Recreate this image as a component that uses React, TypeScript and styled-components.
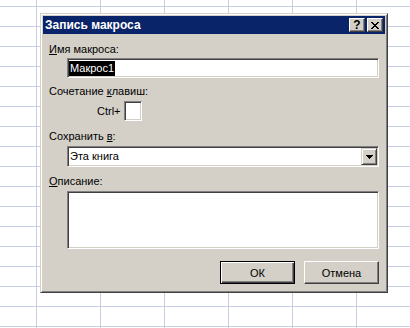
import React from "react";
import styled, { createGlobalStyle } from "styled-components";

const GlobalStyle = createGlobalStyle`
  html, body {
    margin: 0;
    padding: 0;
    width: 410px;
    height: 328px;
    overflow: hidden;
  }
  body {
    background-color: #ffffff;
    background-image:
      linear-gradient(to right, #c6cfe3 1px, transparent 1px),
      linear-gradient(to bottom, #c6cfe3 1px, transparent 1px);
    background-size: 64px 20px;
    background-position: 36px 6px;
    font-family: "Liberation Sans", Tahoma, Arial, sans-serif;
    font-size: 11px;
    color: #000;
  }
`;

const Desktop = styled.div`
  position: relative;
  width: 410px;
  height: 328px;
`;

const Dialog = styled.div`
  position: absolute;
  left: 40px;
  top: 13px;
  width: 348px;
  height: 280px;
  box-sizing: border-box;
  background: #d4d0c8;
  border: 1px solid;
  border-color: #d4d0c8 #404040 #404040 #d4d0c8;
  box-shadow: inset 1px 1px #ffffff, inset -1px -1px #808080;
  padding: 2px;
  display: flex;
  flex-direction: column;
`;

const TitleBar = styled.div`
  height: 18px;
  flex: none;
  background: #0a246a;
  color: #ffffff;
  display: flex;
  align-items: center;
  padding: 0 2px;
  gap: 2px;
`;

const TitleText = styled.div`
  flex: 1;
  font-weight: bold;
  font-size: 12px;
  line-height: 14px;
  white-space: nowrap;
`;

const CaptionButton = styled.div`
  width: 16px;
  height: 14px;
  box-sizing: border-box;
  background: #d4d0c8;
  border: 1px solid;
  border-color: #ffffff #404040 #404040 #ffffff;
  box-shadow: inset -1px -1px #808080;
  display: flex;
  align-items: center;
  justify-content: center;
  color: #000;
  font-weight: bold;
  font-size: 12px;
  line-height: 11px;
`;

const Client = styled.div`
  flex: 1;
  display: flex;
  flex-direction: column;
  padding: 9px 6px 6px 6px;
`;

const Label = styled.div<{ $mt?: number }>`
  height: 13px;
  line-height: 13px;
  margin-top: ${(p) => p.$mt ?? 0}px;
  white-space: nowrap;
`;

const Sunken = styled.div<{ $h: number; $mt: number }>`
  margin: ${(p) => p.$mt}px 0 0 18px;
  height: ${(p) => p.$h}px;
  box-sizing: border-box;
  background: #ffffff;
  border: 1px solid;
  border-color: #808080 #ffffff #ffffff #808080;
  box-shadow: inset 1px 1px #404040, inset -1px -1px #d4d0c8;
  padding: 1px;
  display: flex;
  align-items: center;
`;

const Selected = styled.span`
  background: #000000;
  color: #ffffff;
  line-height: 15px;
  height: 15px;
  padding: 0 1px;
`;

const FieldText = styled.span`
  flex: 1;
  padding-left: 1px;
  line-height: 15px;
`;

const DropButton = styled.div`
  width: 16px;
  box-sizing: border-box;
  align-self: stretch;
  background: #d4d0c8;
  border: 1px solid;
  border-color: #d4d0c8 #404040 #404040 #d4d0c8;
  box-shadow: inset 1px 1px #ffffff, inset -1px -1px #808080;
  display: flex;
  align-items: center;
  justify-content: center;
`;

const HotkeyRow = styled.div`
  margin-top: 3px;
  padding-left: 48px;
  display: flex;
  align-items: center;
  gap: 3px;
  height: 20px;
`;

const KeyBox = styled.div`
  width: 18px;
  height: 20px;
  box-sizing: border-box;
  background: #ffffff;
  border: 1px solid;
  border-color: #808080 #ffffff #ffffff #808080;
  box-shadow: inset 1px 1px #404040, inset -1px -1px #d4d0c8;
`;

const ButtonRow = styled.div`
  margin-top: auto;
  display: flex;
  justify-content: flex-end;
  gap: 9px;
`;

const PushButton = styled.div<{ $default?: boolean }>`
  width: 75px;
  height: 23px;
  box-sizing: border-box;
  background: #d4d0c8;
  display: flex;
  align-items: center;
  justify-content: center;
  border: 1px solid;
  border-color: ${(p) =>
    p.$default ? "#000000" : "#ffffff #404040 #404040 #ffffff"};
  box-shadow: ${(p) =>
    p.$default
      ? "inset 1px 1px #ffffff, inset -1px -1px #404040, inset -2px -2px #808080"
      : "inset -1px -1px #808080"};
`;

const Arrow = () => (
  <svg width="7" height="4" viewBox="0 0 7 4" shapeRendering="crispEdges">
    <path d="M0 0h7v1h-1v1h-1v1h-1v1h-1v-1h-1v-1h-1v-1h-1z" fill="#000" />
  </svg>
);

const CloseGlyph = () => (
  <svg width="8" height="7" viewBox="0 0 8 7" shapeRendering="crispEdges">
    <path
      d="M0 0h2v1h1v1h2v-1h1v-1h2v1h-1v1h-1v1h-1v1h1v1h1v1h1v1h-2v-1h-1v-1h-2v1h-1v1h-2v-1h1v-1h1v-1h1v-1h-1v-1h-1v-1h-1z"
      fill="#000"
    />
  </svg>
);

export default function App() {
  return (
    <>
      <GlobalStyle />
      <Desktop>
        <Dialog>
          <TitleBar>
            <TitleText>Запись макроса</TitleText>
            <CaptionButton>?</CaptionButton>
            <CaptionButton>
              <CloseGlyph />
            </CaptionButton>
          </TitleBar>
          <Client>
            <Label>
              <u>И</u>мя макроса:
            </Label>
            <Sunken $h={20} $mt={2}>
              <Selected>Макрос1</Selected>
            </Sunken>
            <Label $mt={7}>
              Сочетание <u>к</u>лавиш:
            </Label>
            <HotkeyRow>
              <span>Ctrl+</span>
              <KeyBox />
            </HotkeyRow>
            <Label $mt={9}>
              Сохранить <u>в</u>:
            </Label>
            <Sunken $h={21} $mt={3}>
              <FieldText>Эта книга</FieldText>
              <DropButton>
                <Arrow />
              </DropButton>
            </Sunken>
            <Label $mt={8}>
              <u>О</u>писание:
            </Label>
            <Sunken $h={58} $mt={3} />
            <ButtonRow>
              <PushButton $default>ОК</PushButton>
              <PushButton>Отмена</PushButton>
            </ButtonRow>
          </Client>
        </Dialog>
      </Desktop>
    </>
  );
}
